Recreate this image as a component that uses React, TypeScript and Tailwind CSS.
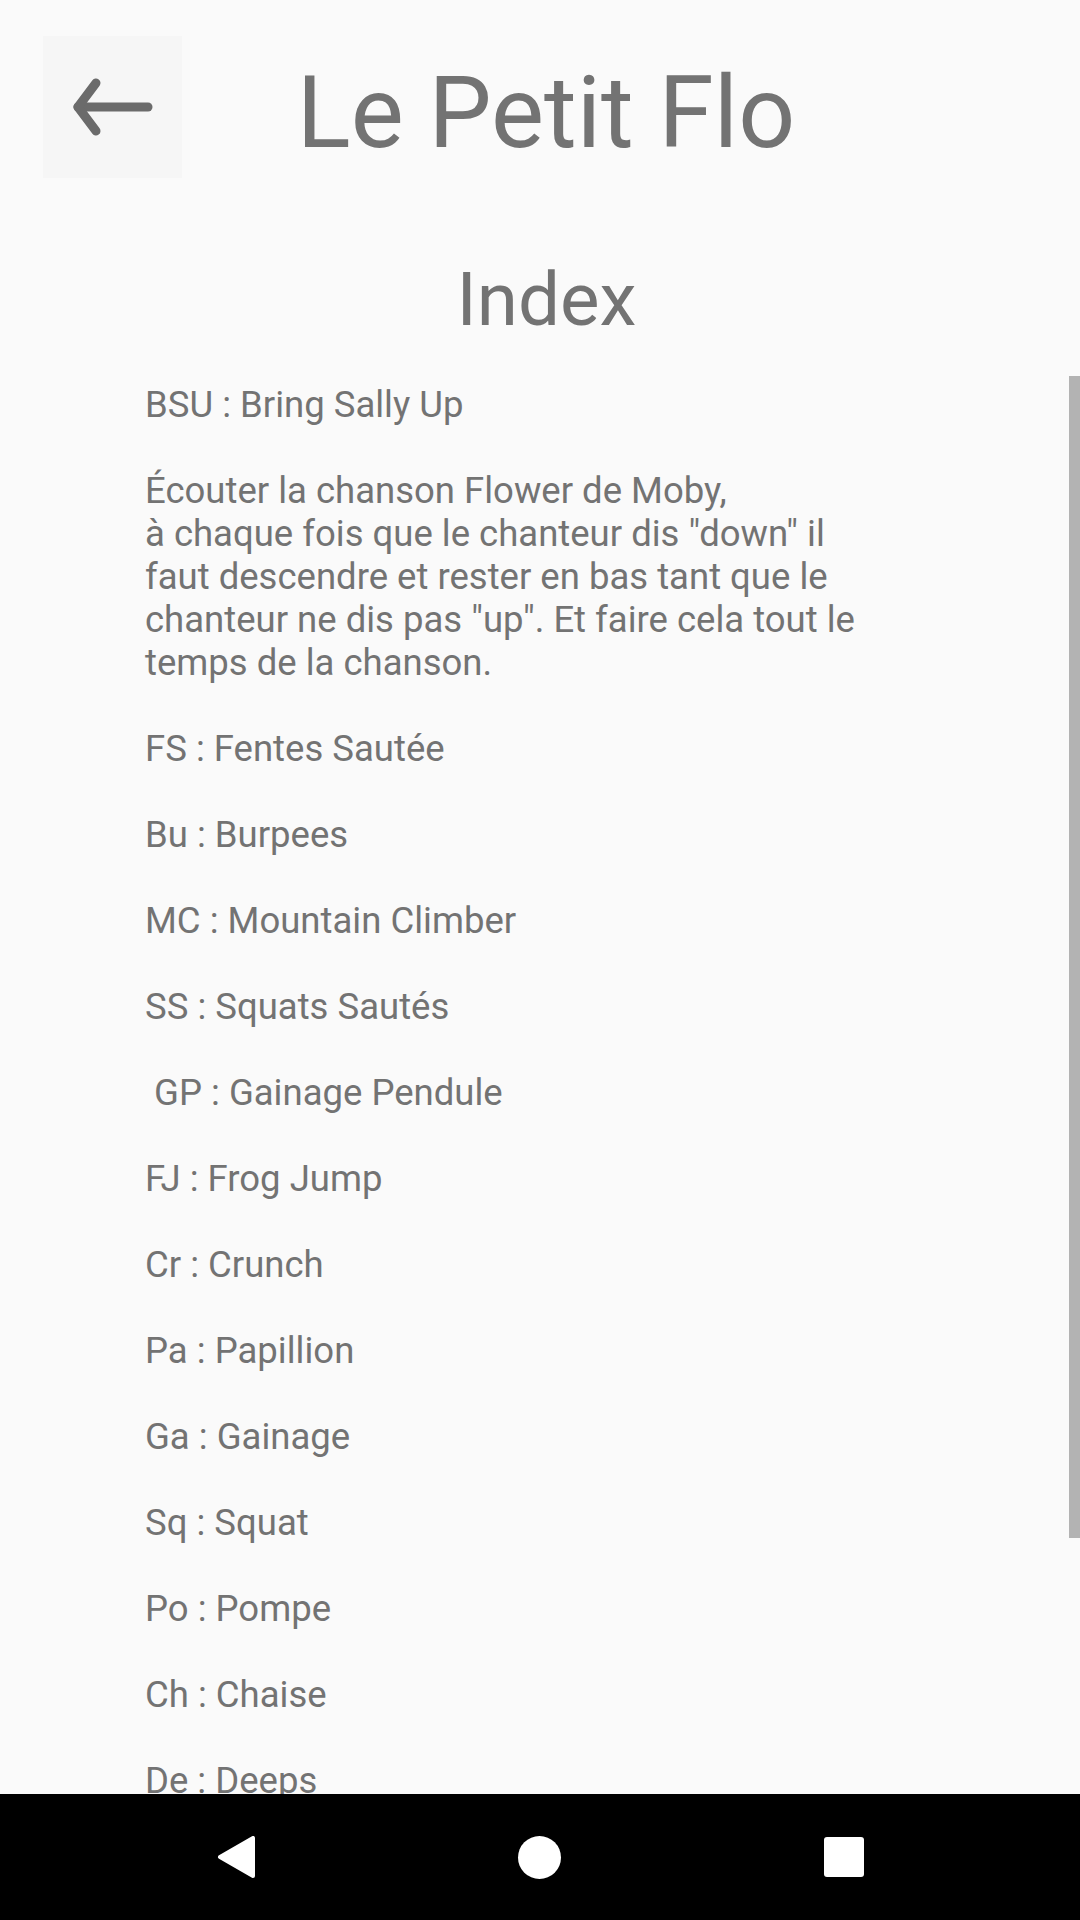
import React from "react";

const lines: string[] = [
  "BSU : Bring Sally Up",
  "",
  "Écouter la chanson Flower de Moby,",
  "à chaque fois que le chanteur dis \"down\" il",
  "faut descendre et rester en bas tant que le",
  "chanteur ne dis pas \"up\". Et faire cela tout le",
  "temps de la chanson.",
  "",
  "FS : Fentes Sautée",
  "",
  "Bu : Burpees",
  "",
  "MC : Mountain Climber",
  "",
  "SS : Squats Sautés",
  "",
  " GP : Gainage Pendule",
  "",
  "FJ : Frog Jump",
  "",
  "Cr : Crunch",
  "",
  "Pa : Papillion",
  "",
  "Ga : Gainage",
  "",
  "Sq : Squat",
  "",
  "Po : Pompe",
  "",
  "Ch : Chaise",
  "",
  "De : Deeps",
  "",
  "",
];

export default function App() {
  return (
    <div
      className="w-[1080px] h-[1920px] bg-[#fafafa] flex flex-col overflow-hidden text-[#737373]"
      style={{ fontFamily: "Roboto, 'Noto Sans', sans-serif" }}
    >
      {/* Header */}
      <div className="flex items-start h-[178px] shrink-0">
        <div className="ml-[43px] mt-[36px] w-[139px] h-[142px] bg-[#f6f6f6] flex items-center justify-center">
          <svg width="139" height="142" viewBox="0 0 139 142">
            <g
              stroke="#6b6b6b"
              strokeWidth="9"
              strokeLinecap="round"
              strokeLinejoin="round"
              fill="none"
            >
              <line x1="35" y1="71" x2="105" y2="71" />
              <polyline points="53,47 35,71 53,95" />
            </g>
          </svg>
        </div>
        <div className="flex-1 text-center mt-[54px] text-[100px] leading-[117px] whitespace-nowrap">
          Le Petit Flo
        </div>
        <div className="w-[170px] shrink-0" />
      </div>

      {/* Index title */}
      <div className="mt-[78px] pl-[13px] text-center text-[74.5px] leading-[87px] shrink-0">
        Index
      </div>

      {/* Scroll area */}
      <div className="mt-[33px] h-[1418px] shrink-0 flex overflow-hidden">
        <div className="flex-1 pl-[145px] pt-[7px]">
          {lines.map((l, i) => (
            <div
              key={i}
              className="h-[43px] text-[36.5px] leading-[43px] whitespace-pre"
            >
              {l}
            </div>
          ))}
        </div>
        <div className="w-[11px] shrink-0">
          <div className="h-[1162px] bg-[#b3b3b3]" />
        </div>
      </div>

      {/* Navigation bar */}
      <div className="h-[126px] shrink-0 bg-black flex items-center justify-center gap-[263px]">
        <svg width="38" height="42" viewBox="0 0 38 42">
          <polygon
            points="36,2 36,40 3,21"
            fill="white"
            stroke="white"
            strokeWidth="4"
            strokeLinejoin="round"
          />
        </svg>
        <div className="w-[43px] h-[43px] rounded-full bg-white" />
        <div className="w-[40px] h-[40px] rounded-[3px] bg-white" />
      </div>
    </div>
  );
}
